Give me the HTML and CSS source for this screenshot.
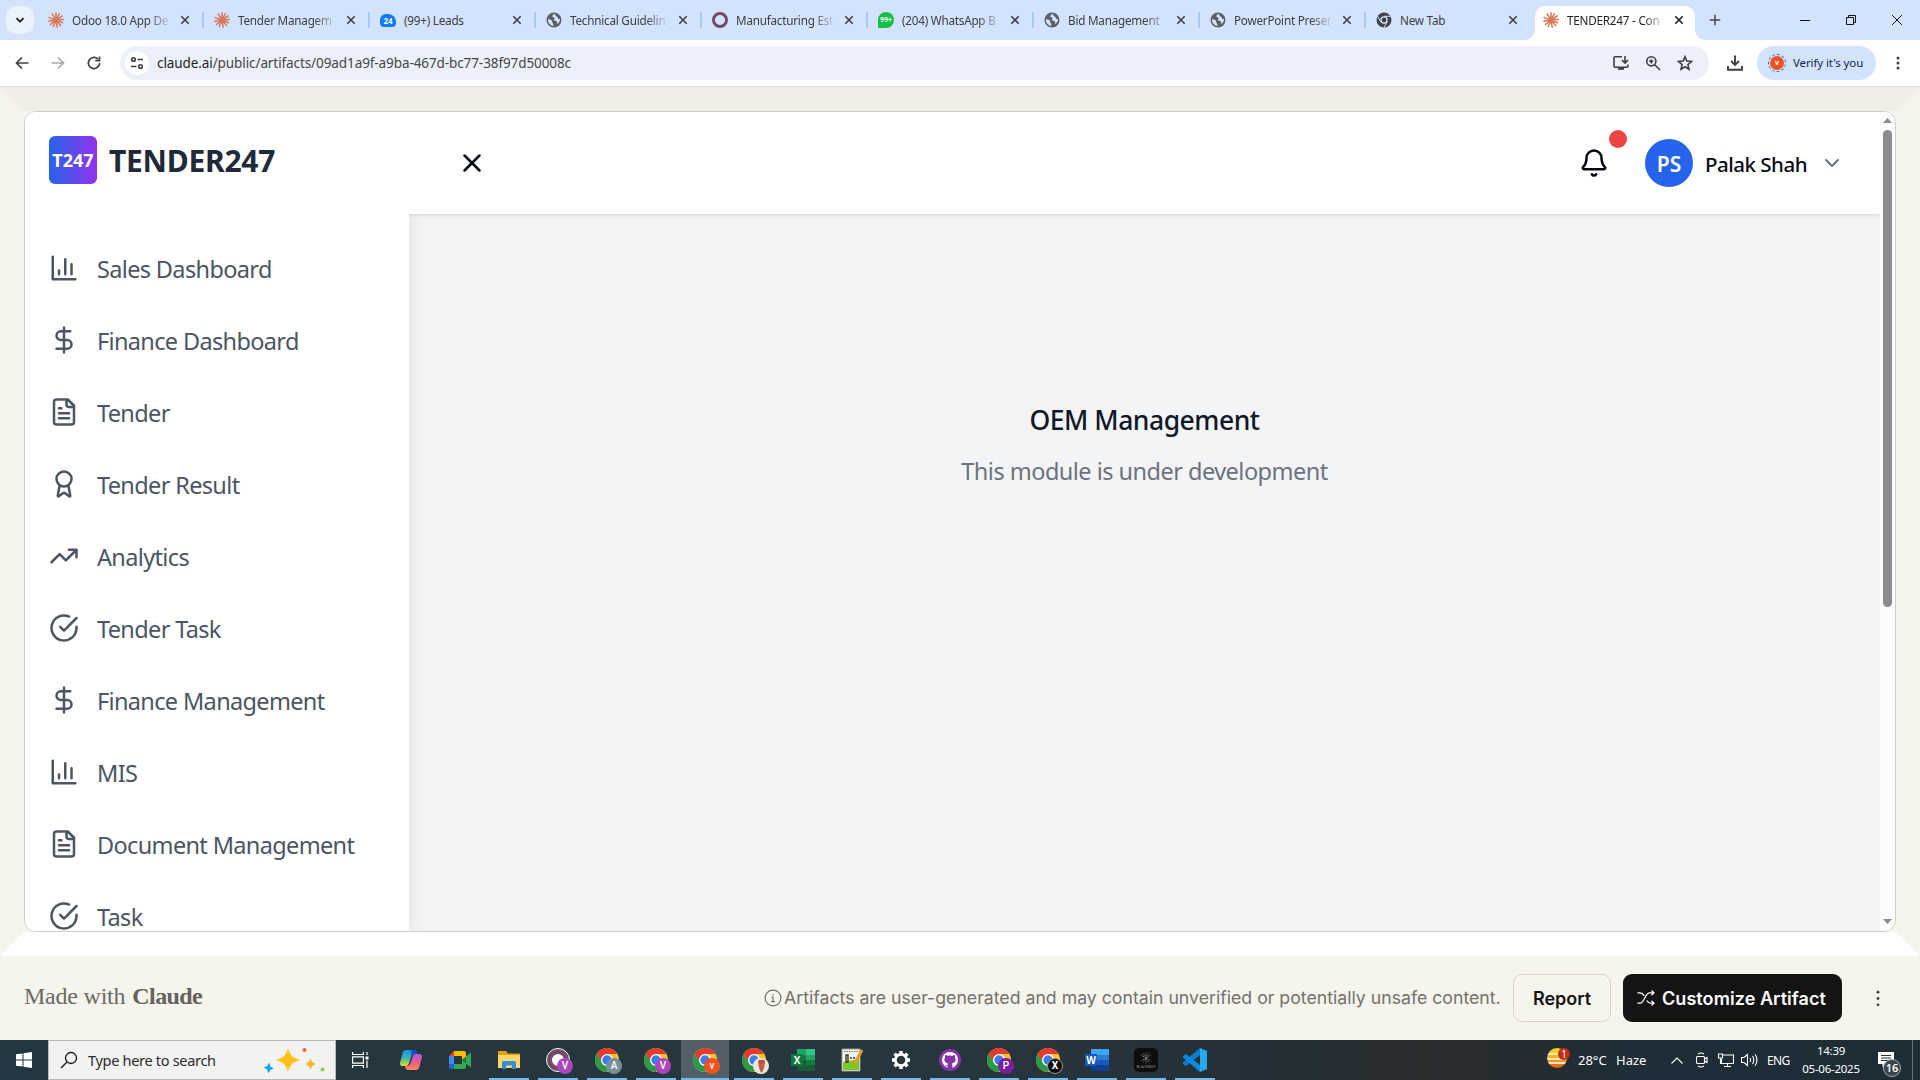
FILE: index.html
```html
<!DOCTYPE html>
<html lang="en">
<head>
<meta charset="utf-8">
<title>TENDER247 - Comprehensive Tender Management</title>
<link rel="stylesheet" href="styles.css">
</head>
<body>
<svg class="defs" aria-hidden="true">
  <symbol id="burst" viewBox="-8 -8 16 16"><g stroke="#d97757" stroke-width="1.5" stroke-linecap="round"><path d="M0 0V-7.2M0 0L3.4-6.3M0 0L6.2-4M0 0L7.3-.6M0 0L6.6 2.8M0 0L4.6 5.6M0 0L1.2 7.2M0 0L-2.6 6.6M0 0L-5.6 4.6M0 0L-7.2 1.2M0 0L-6.8-2.4M0 0L-3.8-6"/></g></symbol>
  <symbol id="globe" viewBox="0 0 16 16"><circle cx="8" cy="8" r="7.5" fill="#5b5f66"/><path d="M9.2 1.9C7.4 2.2 6 3.2 6.3 4.4c.3 1 1.900.6 2.200 1.700.2.9-.7 1.200-.6 2 .2 1 2.200.7 3 1.600.5.700.2 1.600-.2 2.500 2-1 3.300-2.700 3.300-4.600 0-.6-1-.4-1.700-.8-.7-.5-.3-1.300-.9-1.900-.6-.5-1.500-.1-1.900-.8-.3-.700.3-1.200-.3-2.200zM2 7.200c1.500.1 2.700.2 3.600 1 .9.900.2 2 1 2.700.6.500 1 .9.800 2.900C4.400 13.600 2 11.200 2 8.200z" fill="#d3e3fd"/></symbol>
  <symbol id="chromegray" viewBox="0 0 16 16"><circle cx="8" cy="8" r="7.500" fill="#3f4349"/><circle cx="8" cy="8" r="3.700" fill="#d3e3fd"/><circle cx="8" cy="8" r="2.400" fill="#3f4349"/><path d="M8 4.300h6.500M4.800 9.900L1.600 4.300M11.200 9.900L8 15.400" stroke="#d3e3fd" stroke-width="1"/></symbol>
  <symbol id="x" viewBox="0 0 10 10"><path d="M1.300 1.300l7.400 7.400M8.700 1.300L1.300 8.700" stroke="currentColor" stroke-width="1.600"/></symbol>
  <symbol id="bars" viewBox="0 0 24 24"><path d="M3 3v18h18M18 17V9M13 17V5M8 17v-3"/></symbol>
  <symbol id="dollar" viewBox="0 0 24 24"><path d="M12 2v20M17 5H9.500a3.500 3.500 0 0 0 0 7h5a3.500 3.500 0 0 1 0 7H6"/></symbol>
  <symbol id="file" viewBox="0 0 24 24"><path d="M15 2H6a2 2 0 0 0-2 2v16a2 2 0 0 0 2 2h12a2 2 0 0 0 2-2V7ZM14 2v4a2 2 0 0 0 2 2h4M10 9H8M16 13H8M16 17H8"/></symbol>
  <symbol id="award" viewBox="0 0 24 24"><path d="m15.477 12.890 1.515 8.526a.5.5 0 0 1-.810.470l-3.580-2.687a1 1 0 0 0-1.197 0l-3.586 2.686a.5.5 0 0 1-.810-.469l1.514-8.526"/><circle cx="12" cy="8" r="6"/></symbol>
  <symbol id="trend" viewBox="0 0 24 24"><path d="M22 7l-8.500 8.500-5-5L2 17M16 7h6v6"/></symbol>
  <symbol id="check" viewBox="0 0 24 24"><path d="M22 11.080V12a10 10 0 1 1-5.930-9.140M22 4 12 14.010l-3-3"/></symbol>
  <symbol id="chrome" viewBox="0 0 24 24"><circle cx="12" cy="12" r="12" fill="#fbc22d"/><path d="M1.600 6A12 12 0 0 1 22.400 6H12L7 15z" fill="#e33b2e"/><path d="M1.600 6A12 12 0 0 0 12 24l5.200-9L12 12 7 15z" fill="#2a9a49"/><circle cx="12" cy="12" r="6" fill="#fff"/><circle cx="12" cy="12" r="4.700" fill="#3b7ded"/></symbol>
</svg>

<header class="tabstrip">
  <button class="tab-search"><svg width="10" height="10" viewBox="0 0 10 10"><path d="M1.500 3.200L5 6.700l3.500-3.500" fill="none" stroke="#1f1f1f" stroke-width="1.800"/></svg></button>
  <div class="tab"><svg class="fav"><use href="#burst"/></svg><span class="t fade">Odoo 18.0 App De</span><svg class="tx"><use href="#x"/></svg></div>
  <div class="tab"><svg class="fav"><use href="#burst"/></svg><span class="t fade">Tender Managem</span><svg class="tx"><use href="#x"/></svg></div>
  <div class="tab"><span class="fav leads">24</span><span class="t">(99+) Leads</span><svg class="tx"><use href="#x"/></svg></div>
  <div class="tab"><svg class="fav"><use href="#globe"/></svg><span class="t fade">Technical Guidelin</span><svg class="tx"><use href="#x"/></svg></div>
  <div class="tab"><span class="fav ring"></span><span class="t fade">Manufacturing Est</span><svg class="tx"><use href="#x"/></svg></div>
  <div class="tab"><span class="fav wa">99+</span><span class="t fade">(204) WhatsApp B</span><svg class="tx"><use href="#x"/></svg></div>
  <div class="tab"><svg class="fav"><use href="#globe"/></svg><span class="t fade">Bid Management</span><svg class="tx"><use href="#x"/></svg></div>
  <div class="tab"><svg class="fav"><use href="#globe"/></svg><span class="t fade">PowerPoint Preser</span><svg class="tx"><use href="#x"/></svg></div>
  <div class="tab last"><svg class="fav"><use href="#chromegray"/></svg><span class="t">New Tab</span><svg class="tx"><use href="#x"/></svg></div>
  <div class="tab active"><svg class="fav"><use href="#burst"/></svg><span class="t fade">TENDER247 - Con</span><svg class="tx"><use href="#x"/></svg></div>
  <svg class="plus" viewBox="0 0 12 12"><path d="M6 .8v10.400M.8 6h10.400" stroke="#444746" stroke-width="1.500"/></svg>
  <div class="winctl">
    <svg viewBox="0 0 12 12"><path d="M1 6.500h10" stroke="#111"/></svg>
    <svg viewBox="0 0 12 12"><path d="M1.500 3.500h7v7h-7zM3.500 3.500v-2h7v7h-2" fill="none" stroke="#111"/></svg>
    <svg viewBox="0 0 12 12"><path d="M1 1l10 10M11 1L1 11" stroke="#111"/></svg>
  </div>
</header>

<div class="toolbar">
  <div class="navbtns">
    <svg viewBox="0 0 16 16"><path d="M14.500 8H2.500M8 2.500L2.500 8 8 13.500" stroke="#3c4043"/></svg>
    <svg viewBox="0 0 16 16"><path d="M1.500 8h12M8 2.500L13.500 8 8 13.500" stroke="#a8abaf"/></svg>
    <svg viewBox="0 0 16 16"><path d="M13.600 8a5.600 5.600 0 1 1-1.700-4M13.500 1.500v4.200H9.300" stroke="#3c4043"/></svg>
  </div>
  <div class="omnibox">
    <span class="tune"><svg width="14" height="14" viewBox="0 0 14 14" fill="none" stroke="#3c4043" stroke-width="1.600"><circle cx="3.500" cy="3.500" r="1.800"/><path d="M7.500 3.500H13M1 10.500h5.500"/><circle cx="10.500" cy="10.500" r="1.800"/></svg></span>
    <span class="url"><b>claude.ai</b>/public/artifacts/09ad1a9f-a9ba-467d-bc77-38f97d50008c</span>
    <svg class="oi" viewBox="0 0 16 16"><path d="M9 1.800H2a1 1 0 0 0-1 1v8.400a1 1 0 0 0 1 1h12a1 1 0 0 0 1-1V9.500M12 1v6.500M9 5l3 3 3-3"/><path d="M5 12h6v2.800H5z" fill="#3c4043" stroke="none"/></svg>
    <svg class="oi" viewBox="0 0 16 16"><circle cx="6.300" cy="6.300" r="4.600"/><path d="M9.700 9.700L15 15M4.200 6.300h4.200M6.300 4.200v4.200"/></svg>
    <svg class="oi" viewBox="0 0 16 16"><path d="M8 1.700l1.800 4.400 4.700.4-3.600 3.100 1.100 4.600L8 11.700l-4 2.500 1.100-4.600-3.600-3.100 4.700-.4z"/></svg>
  </div>
  <svg class="dl" viewBox="0 0 16 16"><path d="M8 .5v9M4 6l4 4 4-4M1 11v3.800h14V11"/></svg>
  <div class="verify"><span class="vring"><span>v</span></span><span class="vt">Verify it's you</span></div>
  <svg class="kebab" viewBox="0 0 4 16"><circle cx="2" cy="3" r="1.500"/><circle cx="2" cy="8" r="1.500"/><circle cx="2" cy="13" r="1.500"/></svg>
</div>

<section class="stage">
  <div class="frame">
    <aside class="sidebar">
      <div class="brand"><span class="logo">T247</span><span class="name">TENDER247</span></div>
      <nav>
        <a><svg><use href="#bars"/></svg><span>Sales Dashboard</span></a>
        <a><svg><use href="#dollar"/></svg><span>Finance Dashboard</span></a>
        <a><svg><use href="#file"/></svg><span>Tender</span></a>
        <a><svg><use href="#award"/></svg><span>Tender Result</span></a>
        <a><svg><use href="#trend"/></svg><span>Analytics</span></a>
        <a><svg><use href="#check"/></svg><span>Tender Task</span></a>
        <a><svg><use href="#dollar"/></svg><span>Finance Management</span></a>
        <a><svg><use href="#bars"/></svg><span>MIS</span></a>
        <a><svg><use href="#file"/></svg><span>Document Management</span></a>
        <a><svg><use href="#check"/></svg><span>Task</span></a>
      </nav>
    </aside>
    <main>
      <div class="topbar">
        <svg class="ic30" viewBox="0 0 24 24"><path d="M18 6 6 18M6 6l12 12"/></svg>
        <div class="user">
          <div class="bell"><svg class="ic30" viewBox="0 0 24 24"><path d="M10.268 21a2 2 0 0 0 3.464 0M3.262 15.326A1 1 0 0 0 4 17h16a1 1 0 0 0 .740-1.673C19.410 13.956 18 12.499 18 8A6 6 0 0 0 6 8c0 4.499-1.411 5.956-2.738 7.326"/></svg><i></i></div>
          <span class="avatar">PS</span>
          <span class="uname">Palak Shah</span>
          <svg class="chev" viewBox="0 0 24 24"><path d="m6 9 6 6 6-6"/></svg>
        </div>
      </div>
      <div class="content"><h1>OEM Management</h1><p>This module is under development</p></div>
    </main>
    <div class="scroll">
      <svg width="9" height="5" viewBox="0 0 9 5"><path d="M0 5L4.500 0 9 5z" fill="#8b8b8b"/></svg>
      <div class="thumb"></div>
      <svg width="9" height="5" viewBox="0 0 9 5"><path d="M0 0L4.500 5 9 0z" fill="#8b8b8b"/></svg>
    </div>
  </div>
</section>

<footer class="made">
  <div class="mw"><span class="mw1">Made with</span><span class="mw2">Claude</span></div>
  <div class="acts">
    <svg class="info" viewBox="0 0 18 18"><circle cx="9" cy="9" r="7.900"/><path d="M7.300 8H9v4.500M7.200 12.700h3.700M9 5v1.300"/></svg>
    <span class="disc">Artifacts are user-generated and may contain unverified or potentially unsafe content.</span>
    <button class="report"><span>Report</span></button>
    <button class="custom"><svg viewBox="0 0 18 16"><path d="M.5 2.800h2.500c2 0 3 1 4.300 3M.5 13.200h2.500c4.500 0 5-10.400 9.500-10.400h4.500M14.500.5L17 2.800l-2.500 2.400M9.700 10.500c1 1.600 2 2.700 3.800 2.700H17M14.500 10.800l2.500 2.400-2.500 2.300"/></svg><span>Customize Artifact</span></button>
    <svg class="kebab" viewBox="0 0 4 16"><circle cx="2" cy="1.700" r="1.400"/><circle cx="2" cy="8" r="1.400"/><circle cx="2" cy="14.300" r="1.400"/></svg>
  </div>
</footer>

<div class="taskbar">
  <div class="start"><svg width="16" height="16" viewBox="0 0 16 16"><path d="M0 2.300L6.500 1.400V7.500H0zM7.500 1.200L16 0v7.500H7.500zM0 8.500h6.500v6.100L0 13.700zM7.500 8.500H16V16l-8.500-1.200z" fill="#fff"/></svg></div>
  <div class="search">
    <svg width="18" height="18" viewBox="0 0 18 18"><circle cx="11" cy="7" r="5.500" fill="none" stroke="#111" stroke-width="1.300"/><path d="M7 11L1 17" stroke="#111" stroke-width="1.300"/></svg>
    <span>Type here to search</span>
    <svg class="stars" width="62" height="26" viewBox="0 0 62 26"><path d="M24 1c2 7 4 9.500 12 12-8 2.500-10 5-12 12-2-7-4-9.500-12-12 8-2.500 10-5 12-12z" fill="#fcc11c"/><path d="M46.500 11c1 3.500 2 4.500 5.500 6-3.500 1.500-4.500 2.500-5.500 6-1-3.500-2-4.500-5.500-6 3.500-1.500 4.500-2.500 5.500-6z" fill="#fbb82a"/><path d="M5 16.500l1 3.500 3 1.500-3 1-1.500 3-1-3.500L.5 20.500l3-1z" fill="#12a5ea" stroke="#12a5ea"/><circle cx="40.500" cy="3" r="2" fill="#f1603a"/><circle cx="58.500" cy="22.500" r="2" fill="#8fcf4a"/></svg>
  </div>
  <div class="app"><svg width="17" height="16" viewBox="0 0 17 16" fill="none" stroke="#fff" stroke-width="1.200"><path d="M.6 0v2.500h10.800V0M.6 16v-2.500h10.800V16M.6 4.800h10.800v6.400H.6zM15 0v3M15 8.500V16"/><path d="M13.500 4.500h3v3h-3z" fill="#fff" stroke="none"/></svg></div>
  <div class="app gap"><svg width="22" height="20" viewBox="0 0 22 20"><defs><linearGradient id="ca" x1="0" y1="0" x2="0" y2="1"><stop offset="0" stop-color="#1b8ff0"/><stop offset=".5" stop-color="#33b8b0"/><stop offset="1" stop-color="#f4d52b"/></linearGradient><linearGradient id="cb" x1="0" y1="0" x2="0" y2="1"><stop offset="0" stop-color="#a85ae6"/><stop offset=".5" stop-color="#ee5a8e"/><stop offset="1" stop-color="#fb8a52"/></linearGradient></defs><path d="M6 0h8c2 0 2.500 2 3 4h-3c-2 0-2.500 1.500-3 3l-2 6c-.6 1.800-1.400 3-3.500 3H3c-3 0-3.500-2-2.500-5l2-7.500C3.200 1.300 4 0 6 0z" fill="url(#ca)"/><path d="M11 0h3c2 0 2.500 2 3 4h-3c-1.500 0-2 .6-2.500 1.500z" fill="#1a4fc4"/><path d="M16 20H8c-2 0-2.500-2-3-4h2c2 0 3-1.500 3.500-3l2-6c.6-1.800 1.400-3 3.500-3h3c3 0 3.500 2 2.500 5l-2 7.500c-.7 2.200-1.500 3.500-3.500 3.500z" fill="url(#cb)"/></svg></div>
  <div class="app"><svg width="22" height="18" viewBox="0 0 22 18"><path d="M5 0h10a2 2 0 0 1 2 2v4l-4 3V5H5z" fill="#fbbc04"/><path d="M5 0v5H0z" fill="#ea4335"/><path d="M0 5h5v8H0z" fill="#4285f4"/><path d="M0 13h5v5H1.500A1.500 1.500 0 0 1 0 16.500z" fill="#1967d2"/><path d="M5 13h8V9l4 3v4a2 2 0 0 1-2 2H5z" fill="#34a853"/><path d="M13 9l9-7.500v15z" fill="#188038"/><path d="M17 5.600L22 1.500v15l-5-4z" fill="#34a853"/></svg></div>
  <div class="app run"><svg width="22" height="18" viewBox="0 0 22 18"><path d="M0 0h8l2 2.500h12V17H0z" fill="#e1a20b"/><path d="M0 4h22v13H0z" fill="#ffd667"/><path d="M4 18V11.500a1.500 1.500 0 0 1 1.500-1.500h11a1.500 1.500 0 0 1 1.500 1.500V18h-4v-3.500H8V18z" fill="#2f8fdd"/></svg></div>
  <div class="app run"><span class="oring"></span><em class="bdg pv">V</em></div>
  <div class="app run"><svg class="ch"><use href="#chrome"/></svg><em class="bdg pa">A</em></div>
  <div class="app run"><svg class="ch"><use href="#chrome"/></svg><em class="bdg pv">V</em></div>
  <div class="app run on"><svg class="ch"><use href="#chrome"/></svg><em class="bdg po">v</em></div>
  <div class="app run"><svg class="ch"><use href="#chrome"/></svg><em class="bdg pw"><svg width="9" height="13" viewBox="0 0 9 13"><path d="M1.500 1.500L3 0h3.500l1.500 2-.5 4-1.500 4.500L4.500 13 3 10.500 1.500 6z" fill="#b9603f"/><path d="M1.500 0h6v3.500h-6z" fill="#cf4430"/></svg></em></div>
  <div class="app run"><svg width="24" height="22" viewBox="0 0 24 22"><path d="M6 0h9v22H6z" fill="#21a366"/><path d="M15 0h9v6h-9z" fill="#33c481"/><path d="M6 6h9v5H6z" fill="#107c41"/><path d="M15 6h9v5h-9z" fill="#21a366"/><path d="M6 11h18v11H6z" fill="#185c37"/><path d="M15 11h9v5h-9z" fill="#107c41"/><path d="M0 5h12v12H0z" fill="#0f7a40"/><text x="6" y="14.800" class="ol">X</text></svg></div>
  <div class="app run"><svg width="22" height="24" viewBox="0 0 22 24"><path d="M1 1h18v22H1z" fill="#f2f7e8" stroke="#999"/><path d="M2 14l16-3v11H2z" fill="#7fc62a"/><path d="M5 7v7h2V7zM9 10h2M12 10h2" fill="none" stroke="#333" stroke-width="1.400"/><path d="M21 2l-8 15" stroke="#e39a25" stroke-width="3"/><path d="M3 3.500h14" stroke="#6a6a6a" stroke-dasharray="1.500 1"/></svg></div>
  <div class="app run"><svg width="20" height="20" viewBox="-10 -10 20 20"><circle r="5.700" fill="none" stroke="#fff" stroke-width="2.800"/><path d="M0-6v-3M0 6v3M6 0h3M-6 0h-3M4.300 4.300l2.100 2.100M-4.300-4.300l-2.100-2.100M4.300-4.300l2.100-2.100M-4.300 4.300l-2.100 2.100" stroke="#fff" stroke-width="3.400"/></svg></div>
  <div class="app run"><svg width="22" height="22" viewBox="0 0 22 22"><circle cx="11" cy="11" r="11" fill="#8534a8"/><circle cx="11" cy="11" r="8" fill="#fff"/><path d="M6.200 6c.8-.2 1.800.3 2.600.9 1.400-.4 3-.4 4.400 0 .8-.6 1.800-1.100 2.600-.9.300.8.300 1.600.1 2.200 1.600 2.400.7 5.600-2.900 6.200.4.500.4 1.200.4 4.900H8.600v-2c-1.800.3-2.300-.7-3-1.600 1.200 0 1.700 1.100 3 .8 0-.900.2-1.700.4-2.100-3.600-.6-4.500-3.800-2.900-6.200-.2-.6-.2-1.400.1-2.200z" fill="#8534a8"/></svg></div>
  <div class="app run"><svg class="ch"><use href="#chrome"/></svg><em class="bdg pp">P</em></div>
  <div class="app run"><svg class="ch"><use href="#chrome"/></svg><em class="bdg pk">X</em></div>
  <div class="app run"><svg width="24" height="22" viewBox="0 0 24 22"><path d="M6 0h18v6H6z" fill="#41a5ee"/><path d="M6 6h18v5H6z" fill="#2b7cd3"/><path d="M6 11h18v5H6z" fill="#185abd"/><path d="M6 16h18v6H6z" fill="#103f91"/><path d="M0 5h12v12H0z" fill="#185abd"/><text x="6" y="14.800" class="ol">W</text></svg></div>
  <div class="app run"><span class="bb"><svg width="12" height="12" viewBox="-6 -6 12 12"><path d="M0-5.500v11M-4.800-2.800l9.600 5.600M-4.800 2.800l9.600-5.600M-3-4.500l6 9M3-4.500l-6 9" stroke="#888" stroke-width=".9" stroke-dasharray="1.300 .8"/></svg><small>BLACKBOX</small></span></div>
  <div class="app run"><svg width="24" height="24" viewBox="0 0 24 24"><path d="M17 0l7 3v18l-7 3z" fill="#29a8f2"/><path d="M17 0v7L3 18l-3-2V14.500z" fill="#0a7fd0"/><path d="M0 8l3-2 14 11v7L0 9.500z" fill="#0a8be0"/></svg></div>
  <div class="tray">
    <div class="wx"><i></i><b>1</b></div>
    <span class="deg">28°C</span><span class="haze">Haze</span>
    <svg class="up" width="12" height="7" viewBox="0 0 12 7"><path d="M.5 6.500L6 1l5.500 5.500"/></svg>
    <svg class="cam" width="12" height="16" viewBox="0 0 12 16"><path d="M1.500 4.500h6a1 1 0 0 1 1 1v5a1 1 0 0 1-1 1h-6a1 1 0 0 1-1-1v-5a1 1 0 0 1 1-1zM8.500 7l2.500-1.500v5L8.500 9M2 2Q5 0 8 2M2 14q3 2 6 0"/></svg>
    <svg class="mon" width="16" height="15" viewBox="0 0 16 15"><path d="M5 2h10.500v8.500H3.500V6M9.500 10.500v3M6 13.500h7M.5 1h4v4h-4zM2.500 5v6"/></svg>
    <svg class="spk" width="17" height="14" viewBox="0 0 17 14"><path d="M.5 4.500h2.500L6.500 1.500v11L3 9.500H.5zM9 5q1.300 2 0 4M11.500 3q2.700 4 0 8M14 1.200q4 5.800 0 11.600"/></svg>
    <span class="eng">ENG</span>
    <div class="clock"><span>14:39</span><span>05-06-2025</span></div>
    <div class="notif"><svg width="16" height="16" viewBox="0 0 16 16"><path d="M0 0h16v12H8l-3.500 3.500V12H0z" fill="#fff"/><path d="M3 3.500h10M3 6h10M3 8.500h7" stroke="#22323b"/></svg><b>16</b></div>
  </div>
</div>
</body>
</html>
```
FILE: styles.css
```css
* { box-sizing: border-box; }
body { margin: 0; width: 1920px; height: 1080px; overflow: hidden; display: flex; flex-direction: column; font-family: "Noto Sans", "Open Sans", sans-serif; background: #f5f4ed; }
button { font: inherit; border: 0; padding: 0; }
svg { flex: none; display: block; }
.defs { position: absolute; width: 0; height: 0; }

/* Tab strip */
.tabstrip { height: 40px; flex: none; background: #d3e3fd; display: flex; align-items: flex-start; padding-left: 6px; }
.tab-search { width: 28px; height: 28px; margin: 6px 4px 0 0; border-radius: 10px; background: #ebf1fd; display: flex; align-items: center; justify-content: center; }
.tab { width: 166px; flex: none; height: 34px; margin-top: 6px; padding: 0 14px 6px 10px; display: flex; align-items: center; position: relative; color: #3c4043; }
.tab::after { content: ""; position: absolute; right: 0; top: 6px; width: 2px; height: 16px; background: #a8c7fa; }
.tab.last::after { display: none; }
.tab.active { background: #fff; width: 160px; margin-left: 3px; padding: 0 11px 6px 8px; border-radius: 10px 10px 0 0; color: #1f1f1f; }
.tab.active::before, .tab.active::after { content: ""; position: absolute; top: auto; bottom: 0; width: 10px; height: 10px; background: none; }
.tab.active::before { left: -10px; background: radial-gradient(circle at 0 0, transparent 9.5px, #fff 10px); }
.tab.active::after { right: -10px; background: radial-gradient(circle at 100% 0, transparent 9.5px, #fff 10px); }
.fav { width: 16px; height: 16px; flex: none; }
.t { width: 98px; margin-left: 8px; font-size: 11.7px; line-height: 18px; white-space: nowrap; letter-spacing: -.22px; }
.fade { -webkit-mask-image: linear-gradient(90deg, #000 78%, transparent 102%); mask-image: linear-gradient(90deg, #000 78%, transparent 102%); }
.tx { width: 10px; height: 10px; margin-left: auto; }
.leads { background: #0a7cff; color: #fff; border-radius: 6px 8px 4px 4px; font: bold 8px/13px "Open Sans", sans-serif; height: 13px; text-align: center; }
.ring { border: 3.5px solid #714b67; border-radius: 50%; }
.wa { background: #12c143; color: #fff; border-radius: 8px 8px 8px 1px; font: bold 7px/16px Roboto, sans-serif; text-align: center; }
.plus { width: 12px; height: 12px; margin: 14px 0 0 14px; }
.winctl { margin-left: auto; margin-top: 14px; display: flex; gap: 34px; padding-right: 17px; }
.winctl svg { width: 12px; height: 12px; }

/* Toolbar */
.toolbar { height: 47px; flex: none; background: #fff; border-bottom: 1px solid #dcdfe0; display: flex; align-items: center; }
.navbtns { display: flex; gap: 20px; width: 120px; padding-left: 14px; }
.navbtns svg { width: 16px; height: 16px; fill: none; stroke-width: 1.7; }
.omnibox { width: 1589px; height: 34px; border-radius: 17px; background: #ebf0fa; display: flex; align-items: center; padding: 0 16px 0 5px; }
.tune { width: 24px; height: 24px; border-radius: 50%; background: #fff; display: flex; align-items: center; justify-content: center; margin-right: 8px; }
.url { flex: 1; font-size: 13.5px; color: #474747; letter-spacing: -.09px; }
.url b { font-weight: 400; color: #1f1f1f; }
.oi { width: 16px; height: 16px; margin-left: 16px; fill: none; stroke: #3c4043; stroke-width: 1.6; }
.dl { width: 16px; height: 16px; margin-left: 18px; fill: none; stroke: #3c4043; stroke-width: 1.9; }
.verify { margin-left: 14px; width: 119px; height: 34px; border-radius: 17px; background: #d3e3fd; display: flex; align-items: center; padding-left: 11px; font-size: 11.5px; color: #0b2555; }
.vring { width: 18px; height: 18px; border-radius: 50%; border: 1px dashed #2b5fc0; padding: 1px; margin-right: 7px; }
.vring span { display: block; width: 14px; height: 14px; border-radius: 50%; background: #f4511e; color: #fff; font: bold 7px/14px "Noto Sans", sans-serif; text-align: center; }
.vt { white-space: nowrap; letter-spacing: -.1px; padding-bottom: 1px; }
.toolbar .kebab { width: 4px; height: 16px; margin-left: 20px; fill: #3c4043; }

/* Page stage with bevelled edge */
.stage { height: 869px; flex: none; border: 24px solid; border-color: #f0ede5 #f5f4ec #fff #f5f4ec; background: #f5f4ed; }
.frame { height: 821px; border: 1px solid #d1cfc5; border-radius: 12px; overflow: hidden; display: flex; background: #fff; }
.sidebar { width: 384px; flex: none; background: #fff; position: relative; z-index: 1; box-shadow: 2px 0 15px rgba(0, 0, 0, .08); }
.brand { height: 102px; padding: 24px 24px 0; display: flex; }
.logo { width: 48px; height: 48px; border-radius: 6px; background: linear-gradient(90deg, #2563eb, #9333ea); color: #fff; font-weight: 700; font-size: 18px; line-height: 49px; display: flex; justify-content: center; }
.name { margin-left: 12px; font-size: 30px; font-weight: 700; line-height: 50px; letter-spacing: -.25px; color: #1f2937; }
nav { padding-top: 18px; }
nav a { height: 72px; padding: 0 24px; display: flex; align-items: center; gap: 18px; font-size: 23.5px; letter-spacing: -.65px; color: #4b5563; white-space: nowrap; }
nav span { padding-top: 2px; }
nav svg { width: 30px; height: 30px; fill: none; stroke: #4b5563; stroke-width: 2; stroke-linecap: round; stroke-linejoin: round; }
main { flex: 1; background: #f3f4f6; display: flex; flex-direction: column; }
.topbar { height: 102px; flex: none; position: relative; z-index: 2; background: #fff; box-shadow: 0 1px 4px rgba(0, 0, 0, .12); clip-path: inset(0 0 -8px 0); display: flex; justify-content: space-between; align-items: center; padding: 0 36px 0 48px; }
.ic30 { width: 30px; height: 30px; fill: none; stroke: #030712; stroke-width: 2; stroke-linecap: round; stroke-linejoin: round; }
.user { display: flex; align-items: center; }
.bell { position: relative; margin-right: 36px; }
.bell i { position: absolute; left: 30px; top: -18px; width: 18px; height: 18px; border-radius: 50%; background: #ef4444; }
.avatar { width: 48px; height: 48px; border-radius: 50%; background: #2563eb; color: #fff; font-weight: 600; font-size: 21px; padding-top: 2px; display: flex; align-items: center; justify-content: center; }
.uname { width: 102px; margin: 0 13px 0 12px; padding: 2px 0 0; font-size: 20.5px; letter-spacing: -.5px; font-weight: 500; color: #030712; white-space: nowrap; }
.chev { width: 24px; height: 24px; fill: none; stroke: #6b7280; stroke-width: 2; stroke-linecap: round; stroke-linejoin: round; }
.content { padding-top: 185px; text-align: center; }
h1 { margin: 0; font-size: 26.5px; letter-spacing: -.48px; line-height: 42px; font-weight: 500; color: #111827; }
p { margin: 12px 0 0; font-size: 23.5px; letter-spacing: -.52px; line-height: 36px; color: #6b7280; }
.scroll { width: 15px; background: #fcfcfc; display: flex; flex-direction: column; align-items: center; padding: 6px 0 7px; }
.thumb { width: 9px; height: 477px; border-radius: 5px; background: #8b8b8b; margin: 7px 0 auto; }

/* Attribution footer */
.made { height: 84px; flex: none; display: flex; align-items: center; justify-content: space-between; padding: 0 40px 0 24px; }
.mw { font-family: "Liberation Serif", serif; font-size: 24px; letter-spacing: -.22px; color: #6b6a63; display: flex; gap: 7px; padding-bottom: 3px; }
.mw2 { font-weight: 700; letter-spacing: -.6px; color: #64635b; }
.acts { display: flex; align-items: center; }
.info { width: 18px; height: 18px; fill: none; stroke: #73726c; stroke-width: 1.2; margin-right: 2px; }
.disc { width: 717px; margin-right: 12px; padding-bottom: 1px; font: 17.7px Inter, sans-serif; color: #73726c; white-space: nowrap; }
.report, .custom { height: 48px; border-radius: 9px; display: flex; align-items: center; justify-content: center; font: 600 18px Inter, sans-serif; }
.report { width: 98px; border: 1px solid #d6d4ca; background: transparent; color: #141413; margin-right: 12px; }
.custom { width: 219px; background: #141413; color: #fff; gap: 7px; letter-spacing: .07px; padding-right: 2px; white-space: nowrap; }
.custom svg { width: 18px; height: 16px; fill: none; stroke: #fff; stroke-width: 1.2; }
.made .kebab { width: 4px; height: 17px; margin-left: 34px; fill: #3d3d3a; }

/* Taskbar */
.taskbar { height: 40px; flex: none; background: linear-gradient(90deg, #23353e 0%, #27373f 42%, #27343b 55%, #232e35 68%, #2a2c2d 74%, #1e2d37 85%, #1d2c35 100%); display: flex; color: #fff; }
.start { width: 48px; display: flex; align-items: center; justify-content: center; }
.search { width: 288px; background: #f2f2f2; border: 1px solid #b9b9b9; display: flex; align-items: center; padding-left: 11px; font-size: 14.5px; letter-spacing: -.3px; color: #2b2b2b; }
.search span { margin-left: 10px; white-space: nowrap; }
.stars { margin-left: auto; margin-right: 9px; }
.app { width: 48px; margin-right: 1px; display: flex; align-items: center; justify-content: center; position: relative; }
.app.gap { margin-left: 2px; }
.run::after { content: ""; position: absolute; left: 4px; right: 4px; bottom: 0; height: 2px; background: #76b9ed; }
.on { background: #536067; }
.on::after { left: 0; right: 0; }
.ch { width: 24px; height: 24px; }
.oring { width: 22px; height: 22px; border-radius: 50%; border: 5px solid #714b67; background: #fff; outline: 1px solid #fff; }
.bdg { position: absolute; left: 23px; top: 18px; width: 16px; height: 16px; border-radius: 50%; font: 500 10px/16px Roboto, sans-serif; color: #fff; display: flex; align-items: center; justify-content: center; }
.pv { background: #ab47bc; }
.pa { background: #78909c; }
.po { background: #f4511e; }
.pw { background: #e9e4e0; }
.pp { background: #7b1fa2; }
.pk { background: #0a0a0a; border: 1px solid #999; font-weight: 700; }
.ol { fill: #fff; font: bold 10px "Open Sans", sans-serif; text-anchor: middle; }
.bb { width: 24px; height: 24px; border-radius: 5px; background: #0e0e0e; display: flex; flex-direction: column; align-items: center; justify-content: center; }
.bb small { font: 3.8px/5px Roboto, sans-serif; color: #888; }
.tray { margin-left: auto; width: 376px; display: flex; align-items: center; font-size: 13px; }
.tray svg { fill: none; stroke: #fff; stroke-width: 1.1; }
.wx { width: 24px; height: 22px; margin-left: 1px; position: relative; }
.wx i { position: absolute; left: 2px; top: -1px; width: 20px; height: 20px; border-radius: 50%; background: linear-gradient(#fdd017 0 25%, #f5e6c8 25% 35%, #fbb41a 35% 50%, #f5e6c8 50% 60%, #f6931d 60% 72%, #f5e6c8 72% 80%, #ee6d10 80%); }
.wx b { position: absolute; right: -1px; top: -1px; width: 12px; height: 12px; border-radius: 50%; background: #c42b1c; font: 10px/12px "Noto Sans", sans-serif; text-align: center; }
.deg { width: 38px; margin-left: 9px; }
.haze { width: 32px; }
.up { margin-left: 23px; }
.cam { margin-left: 13px; }
.mon { margin-left: 10px; }
.spk { margin-left: 7px; }
.eng { width: 23px; margin-left: 9px; font-size: 12px; letter-spacing: -.6px; }
.clock { width: 60px; margin-left: 11px; display: flex; flex-direction: column; align-items: center; font-size: 11.5px; letter-spacing: -.25px; line-height: 18px; white-space: nowrap; }
.notif { width: 36px; height: 40px; margin-left: 16px; padding: 12px 0 0 1px; border-right: 1px solid #66727a; position: relative; }
.tray .notif svg { stroke: none; }
.notif b { position: absolute; left: 6px; top: 19px; width: 18px; height: 18px; border-radius: 50%; background: #38454c; border: 1px solid #a5adb2; font: 600 11px/16px "Noto Sans", sans-serif; text-align: center; }
```
